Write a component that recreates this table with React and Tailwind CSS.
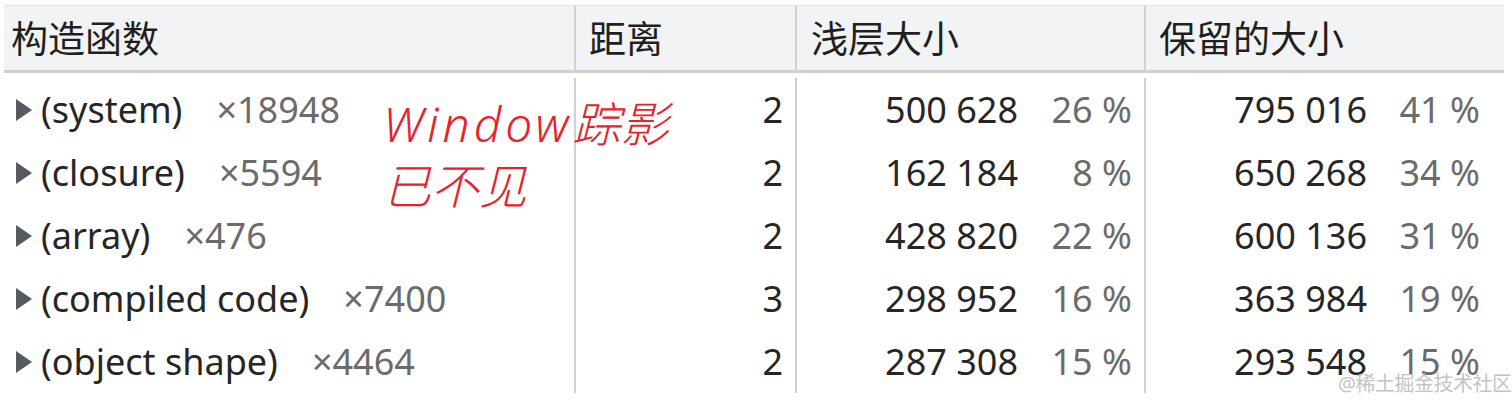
import React from "react";

const rows = [
  { name: "(system)", count: "×18948", dist: "2", shallow: "500 628", sp: "26 %", retained: "795 016", rp: "41 %" },
  { name: "(closure)", count: "×5594", dist: "2", shallow: "162 184", sp: "8 %", retained: "650 268", rp: "34 %" },
  { name: "(array)", count: "×476", dist: "2", shallow: "428 820", sp: "22 %", retained: "600 136", rp: "31 %" },
  { name: "(compiled code)", count: "×7400", dist: "3", shallow: "298 952", sp: "16 %", retained: "363 984", rp: "19 %" },
  { name: "(object shape)", count: "×4464", dist: "2", shallow: "287 308", sp: "15 %", retained: "293 548", rp: "15 %" },
];

const font = { fontFamily: '"Noto Sans", "Noto Sans CJK SC", sans-serif' };

function Triangle() {
  return (
    <svg width="16" height="24" viewBox="0 0 16 24" className="block shrink-0 w-[16px] h-[24px]">
      <polygon points="0,1 16,12 0,23" fill="#555a60" />
    </svg>
  );
}

export default function App() {
  return (
    <div className="relative w-[1512px] h-[409px] bg-white overflow-hidden" style={font}>
      <div className="pt-[5px] pl-[4px]">
        <div className="w-[1500px] border-t border-[#e3e5e8]">
          {/* header */}
          <div className="grid grid-cols-[570px_221px_349px_360px] h-[67px] bg-[#f1f3f4] border-b-[3px] border-[#cfd1d4] text-[37px] text-[#1f1f1f] leading-none">
            <div className="flex items-center pl-[7px]">构造函数</div>
            <div className="flex items-center pl-[13px] border-l-2 border-[#cfd1d4]">距离</div>
            <div className="flex items-center pl-[14px] border-l-2 border-[#cfd1d4]">浅层大小</div>
            <div className="flex items-center pl-[13px] border-l-2 border-[#cfd1d4]">保留的大小</div>
          </div>
          {/* body */}
          <div className="grid grid-cols-[570px_221px_349px_360px] pt-[5px] text-[36px] text-[#262626]">
            <div className="flex flex-col">
              {rows.map((r) => (
                <div key={r.name} className="h-[63px] flex items-center pl-[12px]">
                  <Triangle />
                  <span className="ml-[9px]">{r.name}</span>
                  <span className="ml-[34px] text-[#6b6b6b]">{r.count}</span>
                </div>
              ))}
            </div>
            <div className="flex flex-col border-l-2 border-[#cfd1d4]">
              {rows.map((r) => (
                <div key={r.name} className="h-[63px] flex items-center justify-end pr-[12px]">
                  {r.dist}
                </div>
              ))}
            </div>
            <div className="flex flex-col border-l-2 border-[#cfd1d4]">
              {rows.map((r) => (
                <div key={r.name} className="h-[63px] flex items-center justify-end pr-[12px]">
                  <span>{r.shallow}</span>
                  <span className="w-[114px] text-right text-[#6b6b6b]">{r.sp}</span>
                </div>
              ))}
            </div>
            <div className="flex flex-col border-l-2 border-[#cfd1d4]">
              {rows.map((r) => (
                <div key={r.name} className="h-[63px] flex items-center justify-end pr-[24px]">
                  <span>{r.retained}</span>
                  <span className="w-[113px] text-right text-[#6b6b6b]">{r.rp}</span>
                </div>
              ))}
            </div>
          </div>
        </div>
      </div>

      {/* red annotation */}
      <div className="absolute left-[383px] top-[93px] text-[48px] leading-[62px] italic font-light text-[#e8212b]">
        <div>
          <span className="tracking-[4px]">Window</span>踪影
        </div>
        <div>已不见</div>
      </div>

      {/* watermark */}
      <div className="absolute left-[1338px] top-[370px] text-[20px] leading-[28px] text-[#c4c4c4] tracking-[-0.5px]">
        @稀土掘金技术社区
      </div>
    </div>
  );
}
